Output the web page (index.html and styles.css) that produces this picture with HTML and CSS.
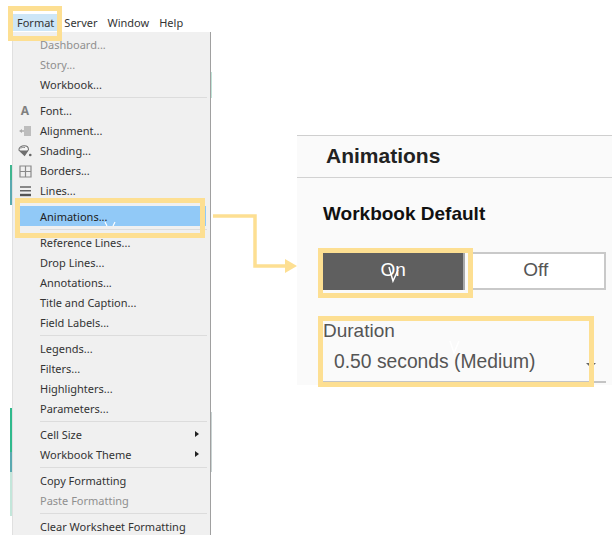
FILE: index.html
```html
<!DOCTYPE html>
<html lang="en">
<head>
    <meta charset="UTF-8"/>
    <title>Format menu - Animations</title>
    <link rel="stylesheet" href="styles.css">
</head>
<body>
<div class="shot">
    <div class="left-col">
        <div class="menubar">
            <span class="menubar-item menubar-cur">Format</span>
            <span class="menubar-item">Server</span>
            <span class="menubar-item">Window</span>
            <span class="menubar-item">Help</span>
        </div>
        <div class="menu">
            <div class="row off"><span class="ico"></span>Dashboard...</div>
            <div class="row off"><span class="ico"></span>Story...</div>
            <div class="row"><span class="ico"></span>Workbook...</div>
            <div class="sep"></div>
            <div class="row"><span class="ico ico-a">A</span>Font...</div>
            <div class="row"><span class="ico">
                <svg width="12" height="10" viewBox="0 0 12 10"><path d="M5 1h7M5 3h7M2 5h10M5 7h7M5 9h7" fill="none" stroke="#8a8a8a" stroke-width="1"/><path d="M0 5l3-2v4z" fill="#aaa"/></svg>
            </span>Alignment...</div>
            <div class="row"><span class="ico">
                <svg width="16" height="14" viewBox="0 0 16 14"><path d="M1 6C1 3 4 1 7 1c3 0 5 2 5 4.500L7.500 12z" fill="#f4f4f4" stroke="#6f6f6f" stroke-width="1.200"/><path d="M1.500 6.500h10L7.500 12z" fill="#6f6f6f"/><path d="M3 4c1-1 3-1.500 5-1" fill="none" stroke="#6f6f6f"/><circle cx="14" cy="11.500" r="1.500" fill="#666"/></svg>
            </span>Shading...</div>
            <div class="row"><span class="ico">
                <svg width="13" height="13" viewBox="0 0 13 13"><path d="M1 1h11v11H1zM6.500 1v11M1 6.500h11" fill="none" stroke="#8a8a8a" stroke-width="1.200"/></svg>
            </span>Borders...</div>
            <div class="row"><span class="ico">
                <svg width="13" height="11" viewBox="0 0 13 11"><path d="M1 1h11M1 4.700h11" stroke="#666" stroke-width="1.500"/><path d="M1 9h11" stroke="#555" stroke-width="2.400"/></svg>
            </span>Lines...</div>
            <div class="sep sep-blank"></div>
            <div class="row row-cur"><span class="ico"></span>Animations...</div>
            <div class="sep"></div>
            <div class="row"><span class="ico"></span>Reference Lines...</div>
            <div class="row"><span class="ico"></span>Drop Lines...</div>
            <div class="row"><span class="ico"></span>Annotations...</div>
            <div class="row"><span class="ico"></span>Title and Caption...</div>
            <div class="row"><span class="ico"></span>Field Labels...</div>
            <div class="sep"></div>
            <div class="row"><span class="ico"></span>Legends...</div>
            <div class="row"><span class="ico"></span>Filters...</div>
            <div class="row"><span class="ico"></span>Highlighters...</div>
            <div class="row"><span class="ico"></span>Parameters...</div>
            <div class="sep"></div>
            <div class="row"><span class="ico"></span>Cell Size<span class="caret"></span></div>
            <div class="row"><span class="ico"></span>Workbook Theme<span class="caret"></span></div>
            <div class="sep"></div>
            <div class="row"><span class="ico"></span>Copy Formatting</div>
            <div class="row off"><span class="ico"></span>Paste Formatting</div>
            <div class="sep"></div>
            <div class="row"><span class="ico"></span>Clear Worksheet Formatting</div>
        </div>
    </div>

    <div class="panel">
        <div class="panel-title">Animations</div>
        <div class="panel-body">
            <div class="panel-sub">Workbook Default</div>
            <div class="toggle">
                <div class="toggle-btn toggle-on">On</div>
                <div class="toggle-btn toggle-off">Off</div>
            </div>
            <div class="field-label">Duration</div>
            <div class="field-select">
                <span>0.50 seconds (Medium)</span>
                <span class="field-arrow"></span>
            </div>
        </div>
    </div>

    <!-- scraps of the sheet behind the menu -->
    <div class="scrap scrap-left"></div>
    <div class="scrap scrap-right"></div>

    <!-- yellow call-outs drawn over the screenshot -->
    <div class="mark mark-format"></div>
    <div class="mark mark-anim"></div>
    <div class="mark mark-on"></div>
    <div class="mark mark-duration"></div>
    <svg class="connector" width="100" height="70" viewBox="0 0 100 70">
        <path d="M0 3h42v50h32" fill="none" stroke="#fddf92" stroke-width="3.500"/>
        <path d="M72 46l12 7-12 7z" fill="#fddf92"/>
    </svg>

    <!-- little white ticks left in the source picture -->
    <svg class="tick tick-anim" width="12" height="6" viewBox="0 0 12 6"><path d="M1 1l2 4M11 1l-2 4" stroke="#fff" stroke-width="1.200"/></svg>
    <svg class="tick tick-on" width="12" height="18" viewBox="0 0 12 18"><path d="M1 2l4 14 5-11" fill="none" stroke="#fff" stroke-width="1.500"/></svg>
    <svg class="tick tick-dur" width="12" height="14" viewBox="0 0 12 14"><path d="M1 1l4 12 5-12" fill="none" stroke="#fff" stroke-width="1.500"/></svg>
</div>
</body>
</html>
```

FILE: styles.css
```css
html, body {margin: 0; padding: 0; background: #fff;}
.shot {
    position: relative;
    display: flex;
    width: 612px;
    height: 535px;
    overflow: hidden;
    font-family: "Noto Sans", "Liberation Sans", sans-serif;
}

/* left: tableau menu */
.left-col {width: 297px; flex: none; padding-left: 12px; box-sizing: border-box;}
.menubar {display: flex; height: 32px; padding-top: 14px; box-sizing: border-box; font-size: 11px; color: #333;}
.menubar-item {padding: 0 5px; height: 17px; line-height: 17px;}
.menubar-cur {background: #cde6f7;}
.menu {
    width: 199px;
    height: 504px;
    padding-top: 3px;
    box-sizing: border-box;
    background: #f0f0f0;
    border-right: 1px solid #a0a0a0;
    border-left: 1px solid #e0e0e0;
    font-size: 11px;
    color: #333;
}
.row {display: flex; align-items: center; height: 20px; padding-left: 5px; position: relative; line-height: 20px; white-space: nowrap;}
.off {color: #8f8f8f;}
.ico {display: flex; width: 14px; height: 20px; flex: none; margin-right: 8px; align-items: center; justify-content: center;}
.ico-a {color: #808080; font-weight: bold; font-size: 12px;}
.sep {height: 6px; margin-left: 27px; position: relative;}
.sep:after {content: ""; position: absolute; left: 0; right: 3px; top: 2px; height: 1px; background: #dcdcdc;}
.sep-blank:after {display: none;}
.row-cur {background: #91c9f7; margin: -1px 4px 1px 6px; padding: 2px 0 0 0; box-sizing: border-box; color: #222;}
.row-cur .ico {width: 21px; margin-right: 0;}
.caret {
    position: absolute;
    right: 11px;
    top: 6px;
    width: 0;
    height: 0;
    border-left: 4px solid #222;
    border-top: 3px solid transparent;
    border-bottom: 3px solid transparent;
}

/* right: animations pane */
.panel {
    width: 315px;
    height: 250px;
    flex: none;
    margin-top: 135px;
    background: #fafafa;
    border-top: 1px solid #cfcfcf;
    box-sizing: border-box;
    font-family: "Liberation Sans", Arial, sans-serif;
}
.panel-title {height: 41px; line-height: 39px; padding-left: 29px; font-size: 21px; font-weight: bold; color: #222; border-bottom: 1px solid #d2d2d2;}
.panel-body {padding: 26px 6px 0 26px;}
.panel-sub {font-size: 19px; font-weight: bold; color: #111; line-height: 20px;}
.toggle {display: flex; gap: 6px; margin-top: 28px;}
.toggle-btn {height: 38px; text-align: center; font-size: 19px; box-sizing: border-box;}
.toggle-on {width: 143px; line-height: 36px; background: #5f5f5f; color: #fff; border-right: 2px solid #aaa;}
.toggle-off {width: 135px; line-height: 32px; padding-right: 6px; background: #fff; color: #555; border: 2px solid #c9c9c9;}
.field-label {margin-top: 29px; font-size: 19px; line-height: 24px; color: #555;}
.field-select {
    display: flex;
    justify-content: space-between;
    align-items: center;
    height: 38px;
    padding: 0 10px 0 11px;
    font-size: 19.300px;
    color: #555;
    border-bottom: 2px solid #c4c4c4;
}
.field-arrow {
    width: 0;
    height: 0;
    margin-top: 6px;
    border-top: 5px solid #666;
    border-left: 5px solid transparent;
    border-right: 5px solid transparent;
}

.scrap {position: absolute; width: 2px;}
.scrap-left {
    left: 10px;
    top: 165px;
    height: 351px;
    background: linear-gradient(to bottom,
        #3fb58f 0, #3fb58f 15px, #5aa9b0 15px, #5aa9b0 40px, transparent 40px,
        transparent 243px, #2fb98c 243px, #2fb98c 287px, #5aa9b0 287px, #5aa9b0 307px,
        #c3e6da 307px, #c3e6da 351px);
}
.scrap-right {
    left: 211px;
    top: 72px;
    width: 1px;
    height: 400px;
    background: linear-gradient(to bottom,
        #bfe3d7 0, #bfe3d7 26px, transparent 26px, transparent 340px,
        #c9d3d3 340px, #c9d3d3 400px);
}

/* call-outs */
.mark {position: absolute; border: 5px solid #fddf92; box-sizing: border-box;}
.mark-format {left: 8px; top: 6px; width: 54px; height: 35px;}
.mark-anim {left: 15px; top: 198px; width: 190px; height: 40px;}
.mark-on {left: 318px; top: 248px; width: 155px; height: 50px;}
.mark-duration {left: 318px; top: 316px; width: 276px; height: 71px;}
.connector {position: absolute; left: 213px; top: 213px;}
.tick {position: absolute;}
.tick-anim {left: 104px; top: 221px;}
.tick-on {left: 388px; top: 265px;}
.tick-dur {left: 449px; top: 340px;}
```
